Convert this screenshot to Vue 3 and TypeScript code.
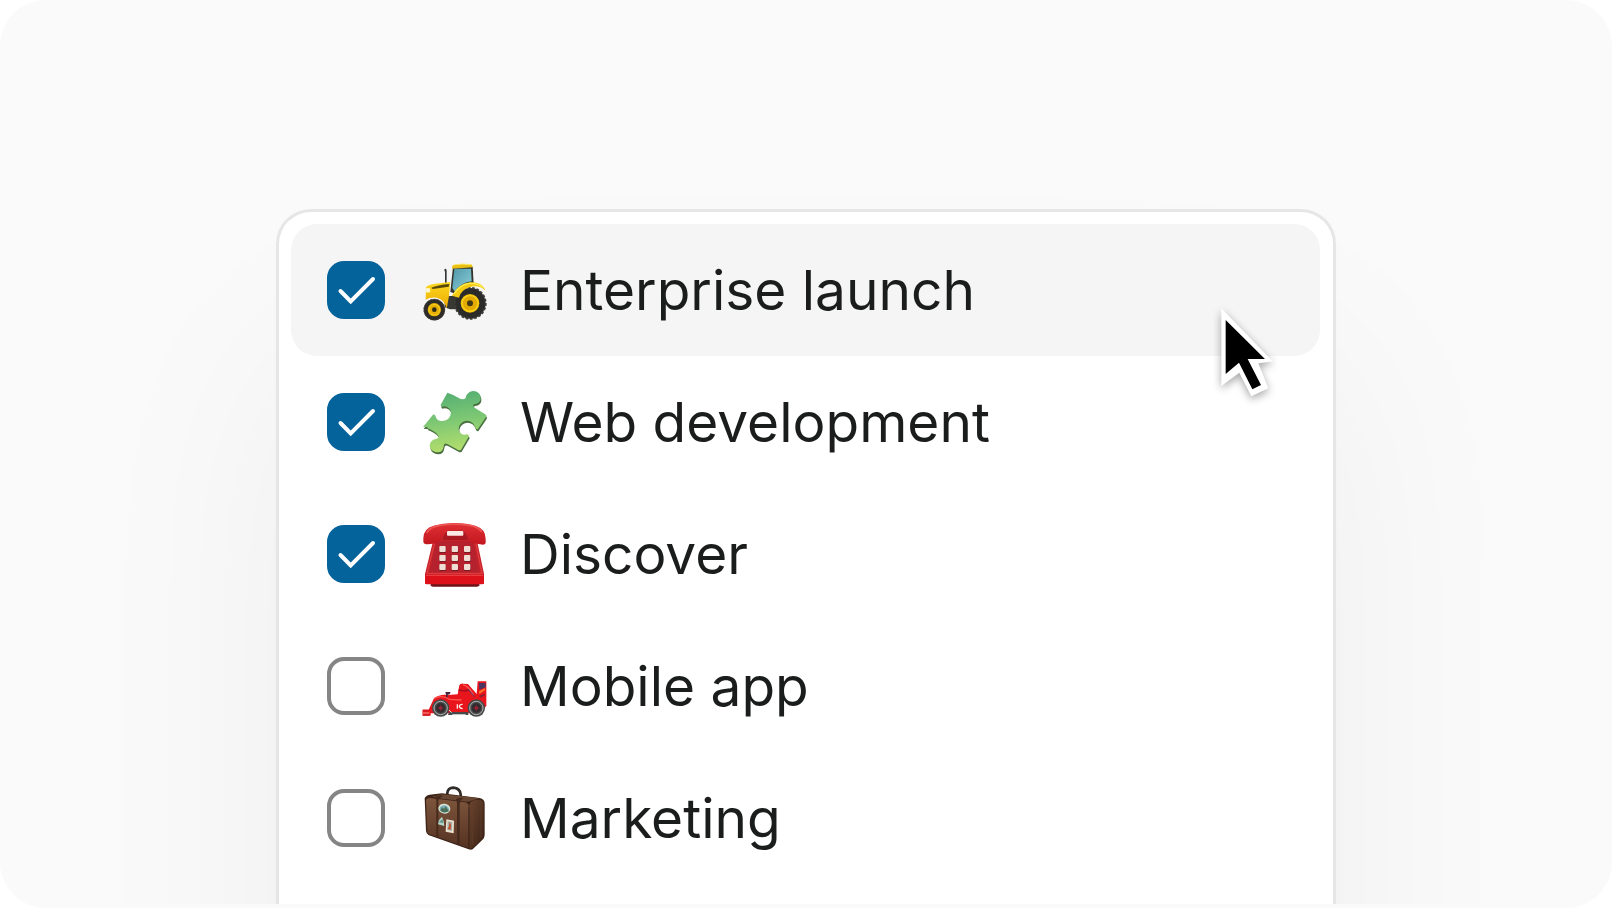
<script setup lang="ts">
import { ref } from 'vue'

type IconName = 'tractor' | 'puzzle' | 'phone' | 'car' | 'luggage'

interface Project {
  id: string
  name: string
  icon: IconName
  checked: boolean
}

const projects = ref<Project[]>([
  { id: 'enterprise', name: 'Enterprise launch', icon: 'tractor', checked: true },
  { id: 'web', name: 'Web development', icon: 'puzzle', checked: true },
  { id: 'discover', name: 'Discover', icon: 'phone', checked: true },
  { id: 'mobile', name: 'Mobile app', icon: 'car', checked: false },
  { id: 'marketing', name: 'Marketing', icon: 'luggage', checked: false },
])

const activeId = ref('enterprise')
const keypadColumns = [88, 125, 162]
const keypadRows = [108, 135, 162]
</script>

<template>
  <main class="stage">
    <div class="viewport">
      <ul class="menu">
        <li v-for="project in projects" :key="project.id" class="item">
          <label
            class="option"
            :class="{ active: project.id === activeId }"
            :for="project.id"
          >
            <span class="check">
              <input :id="project.id" v-model="project.checked" type="checkbox" class="box" />
              <svg v-if="project.checked" class="tick" viewBox="0 0 58 58" aria-hidden="true">
                <path d="M13.5 30 23.7 40.3 46 18" />
              </svg>
            </span>

            <svg v-if="project.icon === 'tractor'" class="icon" viewBox="36 21 198 198" aria-hidden="true">
              <defs>
                <linearGradient id="tractor-glass" x1="0" y1="0" x2="1" y2="1">
                  <stop offset="0" stop-color="#4f98a8" />
                  <stop offset="1" stop-color="#8fd0dc" />
                </linearGradient>
                <linearGradient id="tractor-body" x1="0" y1="0" x2="0" y2="1">
                  <stop offset="0" stop-color="#fbd921" />
                  <stop offset="1" stop-color="#eda900" />
                </linearGradient>
              </defs>
              <path d="M103 60q0-4 3-4 4 0 4 6v38h-5V66z" fill="#35373a" />
              <path d="M129 51 188 50 191 101 140 132 121 126z" fill="#34332c" />
              <path d="M133 56 183 56 185 94q-24 4-35 14-10 8-15 18l-8-12z" fill="url(#tractor-glass)" />
              <path d="M104 138h38v40h-22l-16-6z" fill="#383833" />
              <path d="M48 111q8-7 28-10l45-5-4 42-7 38q-5-23-22-30-20-8-41 3z" fill="url(#tractor-body)" />
              <path d="M64 113q18-8 54-11l-2 8-48 7z" fill="#57480b" />
              <path d="M48 115l11-1 2 11q-6 5-13 1z" fill="#fff6cc" />
              <path d="M128 46q28-7 58-2l2 8-62 4z" fill="#e9bf13" />
              <path d="M131 45q25-5 54-1" fill="none" stroke="#fbe766" stroke-width="3" />
              <circle cx="181" cy="160" r="46" fill="#2b2b29" />
              <circle cx="181" cy="160" r="46" fill="none" stroke="#3b3a35" stroke-width="6" stroke-dasharray="8 5" />
              <path d="M126 137q17-35 53-40 36-3 48 25-22-19-49-10-26 9-31 31z" fill="#f5ca12" />
              <path d="M132 132q18-29 47-32 26-1 39 13" fill="none" stroke="#fff04b" stroke-width="4" />
              <circle cx="180" cy="160" r="28" fill="#e3ab00" />
              <circle cx="180" cy="160" r="24" fill="none" stroke="#f7cf18" stroke-width="5" />
              <circle cx="180" cy="160" r="9" fill="#403716" />
              <circle cx="73" cy="179" r="32" fill="#2d2c2a" />
              <circle cx="73" cy="179" r="31" fill="none" stroke="#43413b" stroke-width="3" stroke-dasharray="6 5" />
              <circle cx="73" cy="179" r="20" fill="#e6b004" />
              <circle cx="73" cy="179" r="16" fill="none" stroke="#f7cf20" stroke-width="3" />
              <circle cx="73" cy="179" r="7" fill="#302b19" />
            </svg>

            <svg v-else-if="project.icon === 'puzzle'" class="icon" viewBox="36 27 198 198" aria-hidden="true">
              <defs>
                <linearGradient id="puzzle-face" gradientUnits="userSpaceOnUse" x1="120" y1="36" x2="145" y2="216">
                  <stop offset="0" stop-color="#55af72" />
                  <stop offset="0.45" stop-color="#7cc774" />
                  <stop offset="1" stop-color="#b6df6b" />
                </linearGradient>
              </defs>
              <path
                d="M39 141 69 104q7-2 8 7 5 13 20 12 18-2 24-16 5-17-8-25-8-5-17-2-6-1-3-7L112 38q15 4 33 15 14 9 22 1 2-13 13-19 15-6 26 4 10 11 4 24-6 9-17 9-8 5 2 12l33 20q2 3 0 7l-25 37q-6 1-8-7-5-18-25-19-15 1-22 15-6 15 6 24 7 5 15 2 7-1 8 6l-24 40q-4 3-8 1l-33-18q-11-5-11 7-2 18-18 18-14-1-21-11-6-10 1-21 5-8 17-9 10-2 4-10-5-9-24-18-9-3-9-7z"
                fill="#4b7142"
                transform="translate(2 6)"
              />
              <path
                d="M39 141 69 104q7-2 8 7 5 13 20 12 18-2 24-16 5-17-8-25-8-5-17-2-6-1-3-7L112 38q15 4 33 15 14 9 22 1 2-13 13-19 15-6 26 4 10 11 4 24-6 9-17 9-8 5 2 12l33 20q2 3 0 7l-25 37q-6 1-8-7-5-18-25-19-15 1-22 15-6 15 6 24 7 5 15 2 7-1 8 6l-24 40q-4 3-8 1l-33-18q-11-5-11 7-2 18-18 18-14-1-21-11-6-10 1-21 5-8 17-9 10-2 4-10-5-9-24-18-9-3-9-7z"
                fill="url(#puzzle-face)"
              />
            </svg>

            <svg v-else-if="project.icon === 'phone'" class="icon" viewBox="36 33 198 198" aria-hidden="true">
              <defs>
                <linearGradient id="phone-handle" x1="0" y1="0" x2="0" y2="1">
                  <stop offset="0" stop-color="#df3033" />
                  <stop offset="1" stop-color="#c31720" />
                </linearGradient>
              </defs>
              <path d="M62 220h146v6q-2 4-7 4H69q-6 0-7-4z" fill="#6f1318" />
              <path d="M70 90 94 64h83l24 28 21 99v28q0 4-5 4H50q-5 0-5-4v-27z" fill="#c5222a" />
              <path d="M78 94h111l20 94H58z" fill="#b5212d" />
              <path d="M74 98 51 190h165L197 98" fill="none" stroke="#dc3a3f" stroke-width="4" />
              <path d="M45 194h177v24q0 4-5 4H50q-5 0-5-4z" fill="#dd1119" />
              <path d="M48 196h171" stroke="#ee4449" stroke-width="3" />
              <path d="M40 85q0-30 31-38 31-9 65-8 34 0 62 9 29 9 29 39v12q-2 5-8 5l-31-5q-7-1-8-8-4-14-19-20-23-5-51 0-16 6-20 20-2 8-9 9l-27 3q-13 0-14-8z" fill="url(#phone-handle)" />
              <path d="M98 90q3-20 16-28h44q13 8 16 28z" fill="#aa1a22" />
              <rect x="111" y="63" width="49" height="14" rx="3" fill="#fbe9e4" />
              <path d="M51 67q9-15 36-20 48-9 95 0 22 4 32 17" fill="none" stroke="#ed5553" stroke-width="5" stroke-linecap="round" />
              <g v-for="y in keypadRows" :key="y">
                <rect v-for="x in keypadColumns" :key="x" :x="x" :y="y + 3" width="20" height="18" rx="3" fill="#7d1a22" />
                <rect v-for="x in keypadColumns" :key="-x" :x="x" :y="y" width="19" height="18" rx="3" fill="#f0ded5" />
              </g>
            </svg>

            <svg v-else-if="project.icon === 'car'" class="icon" viewBox="36 -36 198 198" aria-hidden="true">
              <path d="M38 134h18l16-34q18-14 42-10l29-2 5-27q3-6 12-5l14 1 26 30 3-38h26v74l-21 22H62v7H38z" fill="#e9151c" />
              <path d="M38 134h20v18H38z" fill="#d61820" />
              <path d="M38 142h20v4H38z" fill="#ff7770" />
              <path d="M207 54h20v13l-19 7z" fill="#4b3560" />
              <path d="M207 79 225 70v6l-17 11z" fill="#ff7627" />
              <path d="M207 92l18-6v5l-14 7z" fill="#8d2033" />
              <path d="M106 81h16l-3 7-6 1v9h-5v-9z" fill="#4c263c" />
              <path d="M146 75q18 5 31-1" fill="none" stroke="#a20f1e" stroke-width="5" />
              <path d="M159 59q19 6 31 31" fill="none" stroke="#ff5a58" stroke-width="4" />
              <path d="M174 72l20 24" stroke="#5a3a6c" stroke-width="3" />
              <path d="M72 101q22-13 47 2l36 2" fill="none" stroke="#ff5550" stroke-width="4" />
              <path d="M117 141h58v9h-61z" fill="#48484b" />
              <path d="M117 135l8 8M127 149h40" stroke="#dedede" stroke-width="3" />
              <path d="M142 118v13M158 118q-10 0-10 6 0 6 10 7" fill="none" stroke="#ffe8e6" stroke-width="4" />
              <circle cx="92" cy="129" r="26" fill="#484a4a" />
              <circle cx="92" cy="129" r="20" fill="none" stroke="#b2b4b3" stroke-width="3" />
              <circle cx="92" cy="129" r="14" fill="#2f2b2e" />
              <circle cx="92" cy="129" r="5" fill="#b61e32" />
              <path d="M92 119v20M82 129h20" stroke="#8b2637" stroke-width="2" />
              <circle cx="199" cy="129" r="26" fill="#484a4a" />
              <circle cx="199" cy="129" r="20" fill="none" stroke="#b2b4b3" stroke-width="3" />
              <circle cx="199" cy="129" r="14" fill="#2f2b2e" />
              <circle cx="199" cy="129" r="5" fill="#b61e32" />
              <path d="M199 119v20M189 129h20" stroke="#8b2637" stroke-width="2" />
            </svg>

            <svg v-else class="icon" viewBox="36 30 198 198" aria-hidden="true">
              <defs>
                <linearGradient id="luggage-front" x1="0" y1="0" x2="0" y2="1">
                  <stop offset="0" stop-color="#7d553c" />
                  <stop offset="1" stop-color="#553222" />
                </linearGradient>
                <linearGradient id="luggage-side" x1="0" y1="0" x2="1" y2="1">
                  <stop offset="0" stop-color="#6b452f" />
                  <stop offset="1" stop-color="#3c2216" />
                </linearGradient>
              </defs>
              <path d="M112 66V54q2-16 18-16 20 2 22 20v14" fill="none" stroke="#302c2a" stroke-width="8" />
              <path d="M44 70q2-8 15-11l37-4 113 14q15 3 15 17v94q0 10-8 16l-28 27q-5 2-12 0L55 180q-6-4-7-12z" fill="#3d2418" />
              <path d="M48 77q1-7 12-8l105 13q11 2 11 13v124L57 177q-5-3-5-9z" fill="url(#luggage-front)" />
              <path d="M177 96q1-15 14-20l19-2q11 3 11 13v91q0 8-6 13l-29 28h-9z" fill="url(#luggage-side)" />
              <path d="M66 65 96 58q56 4 112 12l-35 10-76-9z" fill="#684733" />
              <path d="M72 67 79 74v112l6 3V79q1-10 9-13l5-4-7-1z" fill="#452a1d" />
              <path d="M138 71l14-3 9 1q-11 5-12 19v121l-8-4V84z" fill="#452a1d" />
              <path d="M177 96v122" stroke="#2a1a12" stroke-width="2" />
              <path d="M187 89v120M213 77v111" stroke="#60402d" stroke-width="2" />
              <ellipse cx="103" cy="101" rx="18" ry="15" fill="#d8e8d6" transform="rotate(8 103 101)" />
              <ellipse cx="103" cy="102" rx="14" ry="11" fill="#7cadb9" transform="rotate(8 103 102)" />
              <path d="M91 107l5-10 6 5 4-8 11 14q-13 8-26-1z" fill="#4b7058" />
              <path d="M96 125l5 14 2 14-19-5 3-12z" fill="#b3d7c9" />
              <path d="M91 137l7-5 2 13-13-3z" fill="#66988d" />
              <path d="M109 133l23 4-1 38-24-5z" fill="#eee3d1" />
              <path d="M113 139l14 2-1 27-14-3z" fill="#9fb2a8" />
              <path d="M119 140l4 9-1 15-9-2 4-8z" fill="#c54c2b" />
            </svg>

            <span class="name">{{ project.name }}</span>

            <svg v-if="project.id === activeId" class="cursor" viewBox="0 0 270 330" aria-hidden="true">
              <path d="M64 25 218 184 175 190 205 265 154 289 118 218 64 258z" fill="#fff" />
              <path d="M77 60 195 177H143L183 255 157 268 117 188 77 222z" fill="#000" />
            </svg>
          </label>
        </li>
      </ul>
    </div>
  </main>
</template>

<style>
body {
  margin: 0;
  background: #fff;
}
</style>

<style scoped>
.stage {
  box-sizing: border-box;
  height: 100vh;
  padding-bottom: 4px;
  border-radius: 46px;
  overflow: hidden;
  background: #fafafa;
  font-family: Inter, 'Liberation Sans', sans-serif;
}

.viewport {
  box-sizing: border-box;
  height: 100%;
  padding: 212px 24px 0;
  overflow: hidden;
}

.menu {
  box-sizing: border-box;
  max-width: 1054px;
  margin: 0 auto;
  padding: 12px 13px 160px 12px;
  list-style: none;
  border-radius: 32px;
  background: #fff;
  box-shadow:
    0 0 0 3px #e6e6e6,
    0 2px 10px rgba(0, 0, 0, 0.03),
    0 140px 220px rgba(0, 0, 0, 0.05);
}

.option {
  position: relative;
  display: flex;
  align-items: center;
  height: 132px;
  padding: 0 36px;
  border-radius: 26px;
}

.option.active {
  background: #f5f5f5;
}

.check {
  display: grid;
  flex: none;
  width: 58px;
  height: 58px;
  margin-right: 37px;
}

.box,
.tick {
  grid-area: 1 / 1;
  width: 58px;
  height: 58px;
}

.box {
  appearance: none;
  box-sizing: border-box;
  margin: 0;
  border: 4px solid #858585;
  border-radius: 17px;
  background: #fff;
}

.box:checked {
  border-color: #05639c;
  background: #05639c;
}

.tick {
  pointer-events: none;
  fill: none;
  stroke: #fff;
  stroke-width: 4;
  stroke-linecap: round;
  stroke-linejoin: miter;
}

.icon {
  flex: none;
  width: 66px;
  height: 66px;
  margin-right: 32px;
}

.name {
  color: #1b1d1d;
  font-size: 55px;
  line-height: 64px;
  white-space: nowrap;
}

.cursor {
  position: absolute;
  top: 76px;
  right: 30px;
  z-index: 1;
  width: 90px;
  height: 110px;
  filter: drop-shadow(0 3px 4px rgba(0, 0, 0, 0.35));
  pointer-events: none;
}
</style>
